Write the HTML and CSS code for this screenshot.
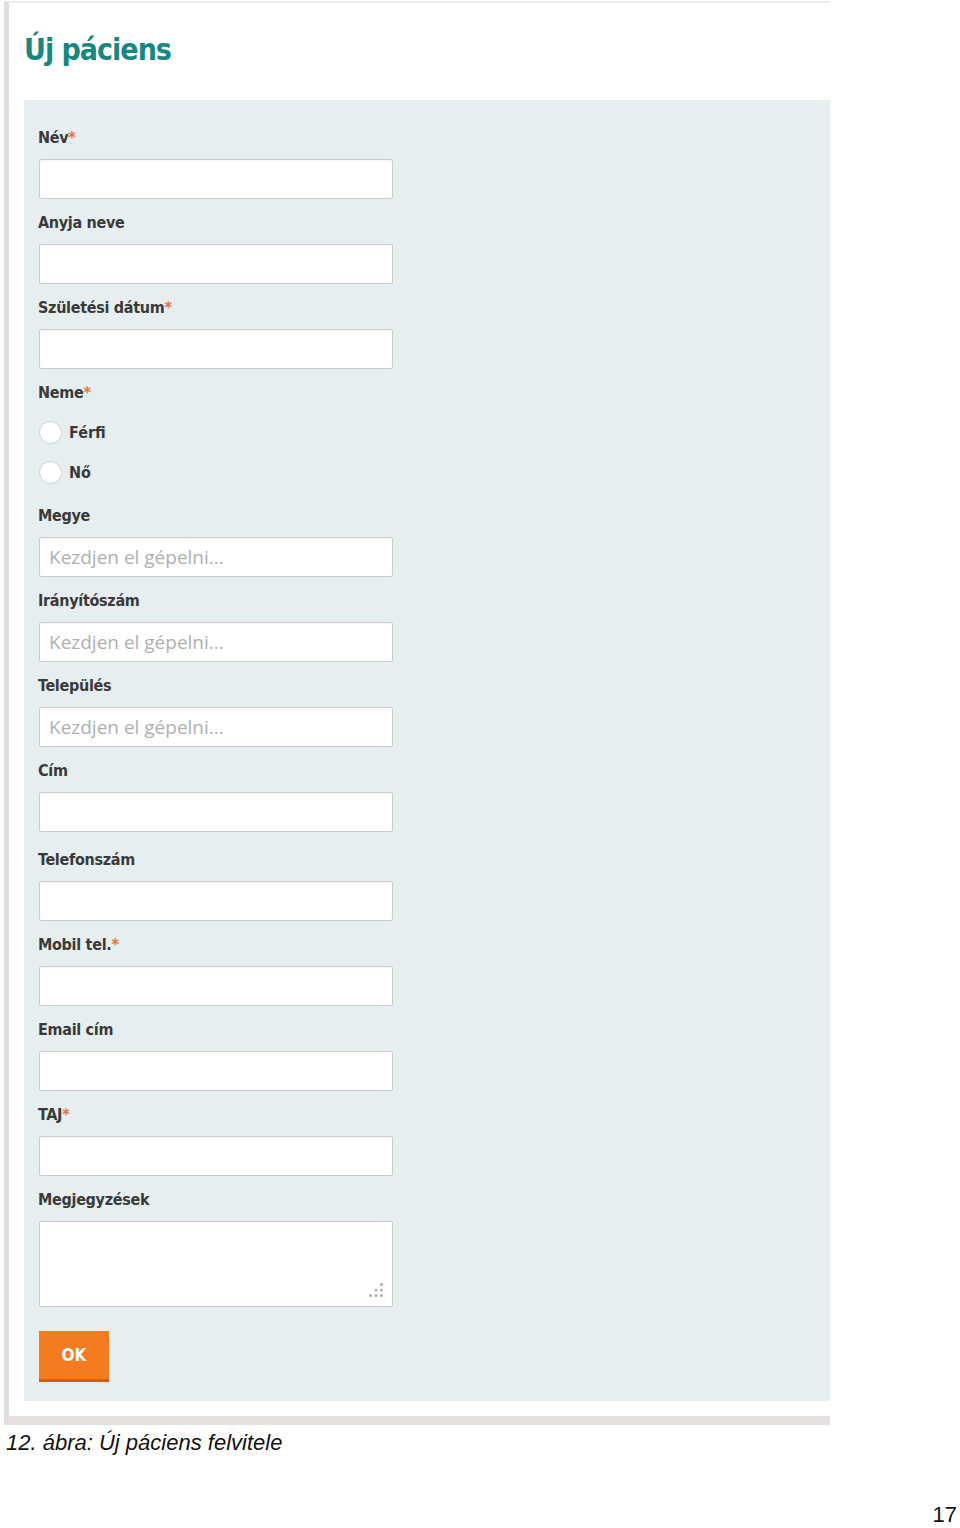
FILE: index.html
```html
<!DOCTYPE html>
<html lang="hu">
<head>
    <meta charset="UTF-8">
    <meta name="viewport" content="width=device-width, initial-scale=1.0">
    <title>Új páciens felvitele</title>
    <link rel="stylesheet" href="styles.css">
</head>
<body>
    <div class="screen">
        <h1 class="page-title">Új páciens</h1>

        <!-- Patient form -->
        <form class="panel">
            <div class="field">
                <label for="nev">Név<span class="req">*</span></label>
                <input type="text" id="nev" class="text-input">
            </div>
            <div class="field">
                <label for="anyja">Anyja neve</label>
                <input type="text" id="anyja" class="text-input">
            </div>
            <div class="field">
                <label for="szul">Születési dátum<span class="req">*</span></label>
                <input type="text" id="szul" class="text-input">
            </div>
            <div class="field field-radio">
                <label>Neme<span class="req">*</span></label>
                <div class="radio-row">
                    <input type="radio" name="neme" id="ferfi" class="radio">
                    <label for="ferfi">Férfi</label>
                </div>
                <div class="radio-row">
                    <input type="radio" name="neme" id="no" class="radio">
                    <label for="no">Nő</label>
                </div>
            </div>
            <div class="field">
                <label for="megye">Megye</label>
                <input type="text" id="megye" class="text-input" placeholder="Kezdjen el gépelni...">
            </div>
            <div class="field">
                <label for="irsz">Irányítószám</label>
                <input type="text" id="irsz" class="text-input" placeholder="Kezdjen el gépelni...">
            </div>
            <div class="field">
                <label for="telepules">Település</label>
                <input type="text" id="telepules" class="text-input" placeholder="Kezdjen el gépelni...">
            </div>
            <div class="field field-wide">
                <label for="cim">Cím</label>
                <input type="text" id="cim" class="text-input">
            </div>
            <div class="field">
                <label for="tel">Telefonszám</label>
                <input type="text" id="tel" class="text-input">
            </div>
            <div class="field">
                <label for="mobil">Mobil tel.<span class="req">*</span></label>
                <input type="text" id="mobil" class="text-input">
            </div>
            <div class="field">
                <label for="email">Email cím</label>
                <input type="text" id="email" class="text-input">
            </div>
            <div class="field">
                <label for="taj">TAJ<span class="req">*</span></label>
                <input type="text" id="taj" class="text-input">
            </div>
            <div class="field">
                <label for="megj">Megjegyzések</label>
                <div class="textarea-wrap">
                    <textarea id="megj" class="text-area"></textarea>
                    <svg class="grip" width="16" height="16" viewBox="0 0 16 16">
                        <circle cx="13.5" cy="2.5" r="1.6" fill="#b3b3b3"/>
                        <circle cx="8" cy="8" r="1.6" fill="#b3b3b3"/>
                        <circle cx="13.5" cy="8" r="1.6" fill="#b3b3b3"/>
                        <circle cx="2.5" cy="13.5" r="1.6" fill="#b3b3b3"/>
                        <circle cx="8" cy="13.5" r="1.6" fill="#b3b3b3"/>
                        <circle cx="13.5" cy="13.5" r="1.6" fill="#b3b3b3"/>
                    </svg>
                </div>
            </div>
            <button type="button" class="ok-btn">OK</button>
        </form>
    </div>

    <p class="caption">12. ábra: Új páciens felvitele</p>
    <p class="page-num">17</p>
</body>
</html>
```

FILE: styles.css
```css
body {
    margin: 0;
    padding: 0;
    background: #fff;
    font-family: "Liberation Sans", Arial, sans-serif;
}
.screen {
    width: 806px;
    margin: 1px 0 0 4px;
    padding: 0 0 15px 15px;
    border-top: 2px solid #ececec;
    border-left: 5px solid #dedede;
    border-bottom: 9px solid #e4e0e0;
}
.page-title {
    margin: 0;
    padding: 27px 0 30px;
    height: 40px;
    line-height: 40px;
    font-family: "DejaVu Sans Condensed", sans-serif;
    font-size: 30px;
    font-weight: bold;
    color: #17877f;
    letter-spacing: -1px;
}
.panel {
    background-color: #e6eef0;
    padding: 26px 0 19px 15px;
}
.field {
    margin-bottom: 12px;
}
.field-wide {
    margin-bottom: 16px;
}
.field > label {
    display: block;
    height: 24px;
    line-height: 24px;
    margin: 0 0 9px -1px;
    font-family: "DejaVu Sans Condensed", sans-serif;
    font-size: 16px;
    font-weight: bold;
    color: #3a3a3a;
    letter-spacing: -0.3px;
}
.req {
    color: #e8703a;
}
.text-input {
    display: block;
    box-sizing: border-box;
    width: 354px;
    height: 40px;
    margin: 0;
    padding: 0 9px;
    border: 1px solid #cccccc;
    border-radius: 2px;
    background: #fff;
    box-shadow: inset 0 1px 2px rgba(0, 0, 0, 0.05);
    font-family: "Open Sans", sans-serif;
    font-size: 19px;
    color: #333;
}
.text-input::placeholder {
    color: #b0b0b0;
}
.field-radio > label {
    margin-bottom: 7px;
}
.radio-row {
    display: flex;
    align-items: center;
    height: 40px;
}
.radio {
    appearance: none;
    box-sizing: border-box;
    width: 23px;
    height: 23px;
    margin: 0 7px 0 0;
    border: 1px solid #d0d0d0;
    border-radius: 50%;
    background: #fff;
}
.radio-row label {
    font-family: "DejaVu Sans Condensed", sans-serif;
    font-size: 16px;
    font-weight: bold;
    color: #3a3a3a;
}
.textarea-wrap {
    position: relative;
    width: 354px;
    height: 86px;
}
.text-area {
    display: block;
    box-sizing: border-box;
    width: 354px;
    height: 86px;
    margin: 0;
    border: 1px solid #cccccc;
    border-radius: 2px;
    background: #fff;
    resize: none;
}
.grip {
    position: absolute;
    right: 9px;
    bottom: 9px;
}
.ok-btn {
    display: block;
    box-sizing: border-box;
    width: 70px;
    height: 51px;
    margin-top: 24px;
    border: 0;
    border-bottom: 3px solid #d45e17;
    background: #f47b20;
    color: #fff;
    font-family: "DejaVu Sans Condensed", sans-serif;
    font-size: 17px;
    font-weight: bold;
    padding: 0;
}
.caption {
    margin: 4px 0 0 6px;
    line-height: 28px;
    font-size: 22px;
    font-style: italic;
    color: #111;
}
.page-num {
    margin: 44px 3px 0 0;
    line-height: 28px;
    text-align: right;
    font-size: 22px;
    color: #111;
}
```
